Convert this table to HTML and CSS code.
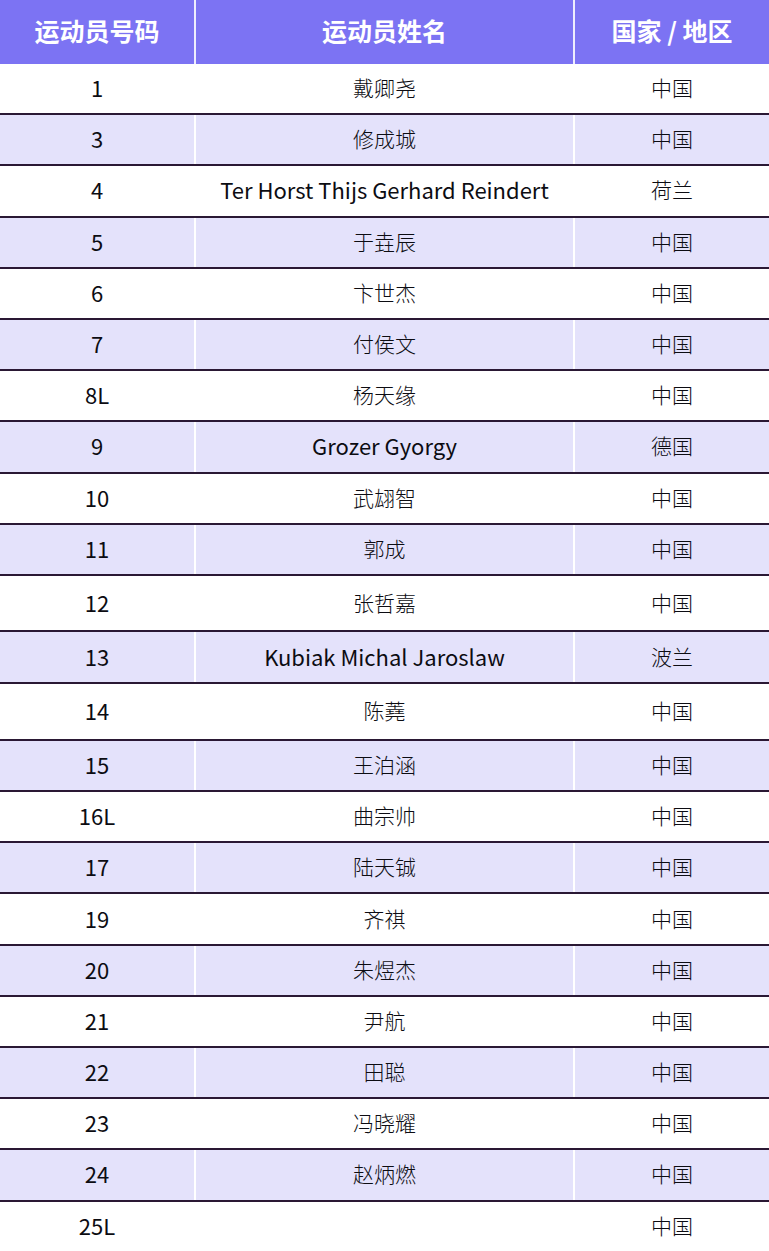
FILE: index.html
```html
<!DOCTYPE html>
<html lang="zh-CN">
<head>
<meta charset="utf-8">
<title>运动员名单</title>
<link rel="stylesheet" href="styles.css">
</head>
<body>
<div class="table">
  <div class="row head">
    <div class="cell c1">运动员号码</div>
    <div class="cell c2">运动员姓名</div>
    <div class="cell c3">国家 / 地区</div>
  </div>
  <div class="row"><div class="cell c1">1</div><div class="cell c2 cn">戴卿尧</div><div class="cell c3 cn">中国</div></div>
  <div class="row alt"><div class="cell c1">3</div><div class="cell c2 cn">修成城</div><div class="cell c3 cn">中国</div></div>
  <div class="row"><div class="cell c1">4</div><div class="cell c2">Ter Horst Thijs Gerhard Reindert</div><div class="cell c3 cn">荷兰</div></div>
  <div class="row alt"><div class="cell c1">5</div><div class="cell c2 cn">于垚辰</div><div class="cell c3 cn">中国</div></div>
  <div class="row"><div class="cell c1">6</div><div class="cell c2 cn">卞世杰</div><div class="cell c3 cn">中国</div></div>
  <div class="row alt"><div class="cell c1">7</div><div class="cell c2 cn">付侯文</div><div class="cell c3 cn">中国</div></div>
  <div class="row"><div class="cell c1">8L</div><div class="cell c2 cn">杨天缘</div><div class="cell c3 cn">中国</div></div>
  <div class="row alt"><div class="cell c1">9</div><div class="cell c2">Grozer Gyorgy</div><div class="cell c3 cn">德国</div></div>
  <div class="row"><div class="cell c1">10</div><div class="cell c2 cn">武翃智</div><div class="cell c3 cn">中国</div></div>
  <div class="row alt"><div class="cell c1">11</div><div class="cell c2 cn">郭成</div><div class="cell c3 cn">中国</div></div>
  <div class="row tall"><div class="cell c1">12</div><div class="cell c2 cn">张哲嘉</div><div class="cell c3 cn">中国</div></div>
  <div class="row alt mid"><div class="cell c1">13</div><div class="cell c2">Kubiak Michal Jaroslaw</div><div class="cell c3 cn">波兰</div></div>
  <div class="row tall"><div class="cell c1">14</div><div class="cell c2 cn">陈蕘</div><div class="cell c3 cn">中国</div></div>
  <div class="row alt"><div class="cell c1">15</div><div class="cell c2 cn">王泊涵</div><div class="cell c3 cn">中国</div></div>
  <div class="row"><div class="cell c1">16L</div><div class="cell c2 cn">曲宗帅</div><div class="cell c3 cn">中国</div></div>
  <div class="row alt"><div class="cell c1">17</div><div class="cell c2 cn">陆天铖</div><div class="cell c3 cn">中国</div></div>
  <div class="row"><div class="cell c1">19</div><div class="cell c2 cn">齐祺</div><div class="cell c3 cn">中国</div></div>
  <div class="row alt"><div class="cell c1">20</div><div class="cell c2 cn">朱煜杰</div><div class="cell c3 cn">中国</div></div>
  <div class="row"><div class="cell c1">21</div><div class="cell c2 cn">尹航</div><div class="cell c3 cn">中国</div></div>
  <div class="row alt"><div class="cell c1">22</div><div class="cell c2 cn">田聪</div><div class="cell c3 cn">中国</div></div>
  <div class="row"><div class="cell c1">23</div><div class="cell c2 cn">冯晓耀</div><div class="cell c3 cn">中国</div></div>
  <div class="row alt"><div class="cell c1">24</div><div class="cell c2 cn">赵炳燃</div><div class="cell c3 cn">中国</div></div>
  <div class="row last"><div class="cell c1">25L</div><div class="cell c2 cn"></div><div class="cell c3 cn">中国</div></div>
</div>
</body>
</html>
```
FILE: styles.css
```css
html, body {
  margin: 0;
  padding: 0;
  background: #ffffff;
}
body {
  width: 769px;
  height: 1251px;
  overflow: hidden;
  font-family: "Noto Sans CJK SC", "Noto Sans", sans-serif;
  color: #0c0c12;
}
.table {
  display: flex;
  flex-direction: column;
}
.row {
  display: flex;
  height: 51.2px;
  box-sizing: border-box;
  border-bottom: 2px solid #2a1834;
  background: #ffffff;
}
.row.alt {
  background: #e4e2fb;
}
.row.tall {
  height: 56.5px;
}
.row.mid {
  height: 52px;
}
.row.last {
  border-bottom: none;
  height: 50px;
}
.row.head {
  height: 64px;
  background: #7c73f3;
  border-bottom: none;
}
.cell {
  display: flex;
  align-items: center;
  justify-content: center;
  box-sizing: border-box;
  font-size: 22px;
  font-weight: 400;
  white-space: nowrap;
  padding-bottom: 3px;
}
.cn {
  font-size: 21px;
  font-weight: 300;
}
.c1 {
  width: 196px;
  border-right: 2px solid #ffffff;
}
.c2 {
  width: 379px;
  border-right: 2px solid #ffffff;
}
.c3 {
  width: 194px;
}
.head .cell {
  color: #ffffff;
  font-size: 25px;
  font-weight: 700;
  padding-bottom: 4px;
}
.head .c1, .head .c2 {
  border-right-color: #eeedfd;
}
```
